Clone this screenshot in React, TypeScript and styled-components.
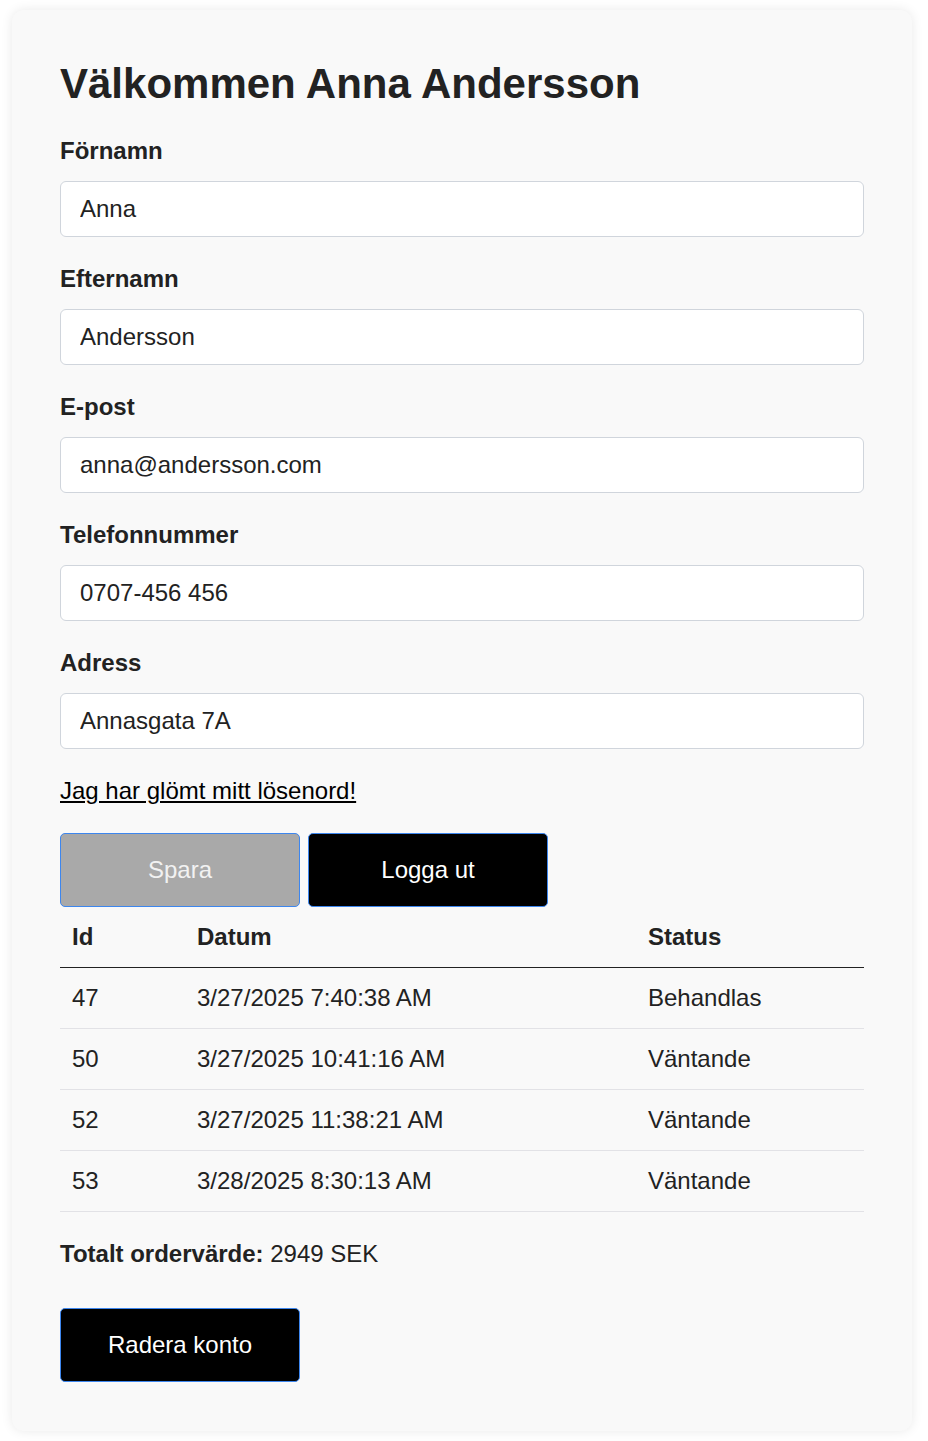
import React from 'react';
import styled, { createGlobalStyle, css } from 'styled-components';

const GlobalStyle = createGlobalStyle`
  html, body {
    margin: 0;
    padding: 0;
    background: #ffffff;
  }
  body {
    font-family: 'Liberation Sans', Arial, sans-serif;
    color: #222222;
  }
`;

const Card = styled.div`
  box-sizing: border-box;
  width: 900px;
  margin: 10px 0 11px 12px;
  padding: 50px 48px 49px;
  background: #f9f9f9;
  border-radius: 12px;
  box-shadow: 0 0 12px rgba(0, 0, 0, 0.09);
`;

const Heading = styled.h1`
  margin: 0 0 29px;
  font-size: 42px;
  line-height: 48px;
  font-weight: 700;
  color: #222222;
`;

const Field = styled.div`
  display: flex;
  flex-direction: column;
  margin-bottom: 28px;
`;

const Label = styled.label`
  display: block;
  font-size: 24px;
  line-height: 28px;
  font-weight: 700;
  margin-bottom: 16px;
`;

const Input = styled.input`
  box-sizing: border-box;
  width: 100%;
  height: 56px;
  padding: 0 19px;
  font-family: inherit;
  font-size: 24px;
  color: #222222;
  background: #ffffff;
  border: 1px solid #d0d5dc;
  border-radius: 6px;
  outline: none;
`;

const ForgotLink = styled.a`
  display: inline-block;
  font-size: 24px;
  line-height: 28px;
  color: #000000;
  text-decoration: underline;
  margin-bottom: 28px;
`;

const Buttons = styled.div`
  display: flex;
  gap: 8px;
`;

const Button = styled.button<{ $disabled?: boolean }>`
  box-sizing: border-box;
  width: 240px;
  height: 74px;
  padding: 0;
  font-family: inherit;
  font-size: 24px;
  color: #ffffff;
  background: #000000;
  border: 1px solid #3d86ee;
  border-radius: 5px;
  cursor: pointer;

  ${(p) =>
    p.$disabled &&
    css`
      background: #a9a9a9;
      color: #f2f2f2;
      cursor: default;
    `}
`;

const Table = styled.table`
  width: 100%;
  border-collapse: collapse;
  table-layout: fixed;
  font-size: 24px;
`;

const Th = styled.th<{ $w: number }>`
  box-sizing: border-box;
  width: ${(p) => p.$w}px;
  height: 60px;
  padding: 0 12px;
  text-align: left;
  font-weight: 700;
  border-bottom: 1px solid #222222;
`;

const Td = styled.td`
  height: 60px;
  padding: 0 12px;
  border-bottom: 1px solid #e2e2e6;
`;

const Total = styled.p`
  margin: 28px 0 40px;
  font-size: 24px;
  line-height: 28px;
`;

const orders = [
  { id: 47, date: '3/27/2025 7:40:38 AM', status: 'Behandlas' },
  { id: 50, date: '3/27/2025 10:41:16 AM', status: 'Väntande' },
  { id: 52, date: '3/27/2025 11:38:21 AM', status: 'Väntande' },
  { id: 53, date: '3/28/2025 8:30:13 AM', status: 'Väntande' },
];

const fields = [
  { label: 'Förnamn', value: 'Anna' },
  { label: 'Efternamn', value: 'Andersson' },
  { label: 'E-post', value: 'anna@andersson.com' },
  { label: 'Telefonnummer', value: '0707-456 456' },
  { label: 'Adress', value: 'Annasgata 7A' },
];

export default function App() {
  return (
    <>
      <GlobalStyle />
      <Card>
        <Heading>Välkommen Anna Andersson</Heading>
        {fields.map((f) => (
          <Field key={f.label}>
            <Label>{f.label}</Label>
            <Input defaultValue={f.value} />
          </Field>
        ))}
        <ForgotLink href="#">Jag har glömt mitt lösenord!</ForgotLink>
        <Buttons>
          <Button $disabled>Spara</Button>
          <Button>Logga ut</Button>
        </Buttons>
        <Table>
          <thead>
            <tr>
              <Th $w={125}>Id</Th>
              <Th $w={451}>Datum</Th>
              <Th $w={228}>Status</Th>
            </tr>
          </thead>
          <tbody>
            {orders.map((o) => (
              <tr key={o.id}>
                <Td>{o.id}</Td>
                <Td>{o.date}</Td>
                <Td>{o.status}</Td>
              </tr>
            ))}
          </tbody>
        </Table>
        <Total>
          <strong>Totalt ordervärde:</strong> 2949 SEK
        </Total>
        <Button>Radera konto</Button>
      </Card>
    </>
  );
}
